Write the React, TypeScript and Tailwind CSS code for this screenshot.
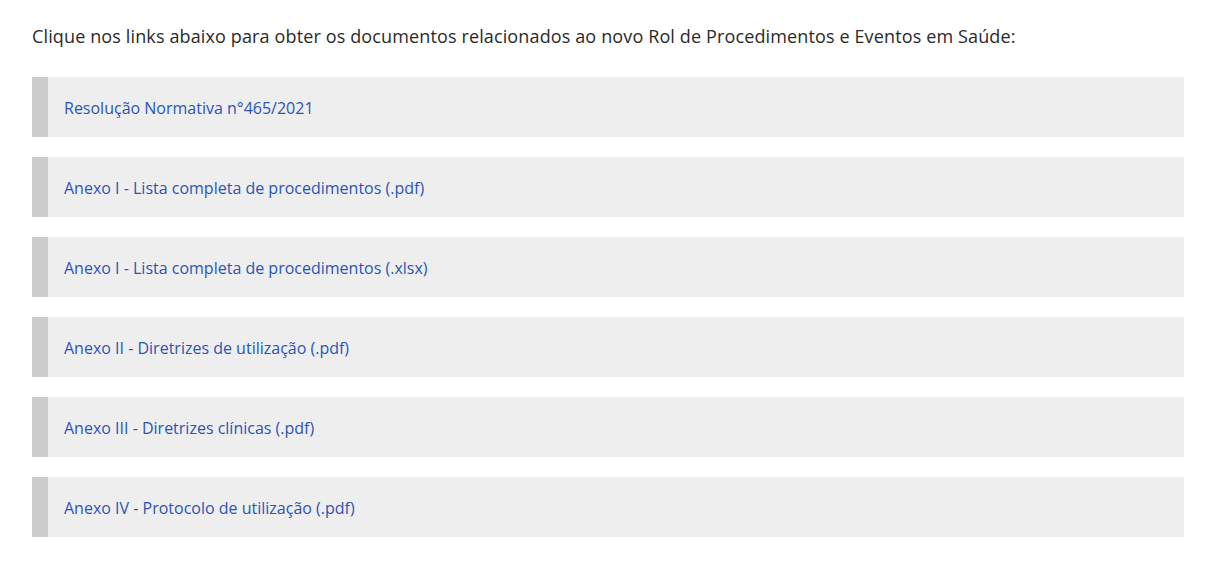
const links = [
  "Resolução Normativa n°465/2021",
  "Anexo I - Lista completa de procedimentos (.pdf)",
  "Anexo I - Lista completa de procedimentos (.xlsx)",
  "Anexo II - Diretrizes de utilização (.pdf)",
  "Anexo III - Diretrizes clínicas (.pdf)",
  "Anexo IV - Protocolo de utilização (.pdf)",
];

export default function App() {
  return (
    <div
      className="min-h-[576px] bg-white pl-8 pr-6 pt-[25px]"
      style={{ fontFamily: "'Open Sans', 'Liberation Sans', sans-serif" }}
    >
      <p className="text-[18px] leading-[22px] font-medium tracking-[0.13px] text-[#2a2a2a]">
        Clique nos links abaixo para obter os documentos relacionados ao novo Rol de Procedimentos e Eventos em Saúde:
      </p>

      <div className="mt-[30px] flex flex-col gap-5">
        {links.map((label) => (
          <div
            key={label}
            className="flex h-[60px] items-center border-l-[16px] border-[#cccccc] bg-[#eeeeee] pl-4 pt-[2px]"
          >
            <a href="#" className="text-[16px] text-[#2b55b5]">
              {label}
            </a>
          </div>
        ))}
      </div>
    </div>
  );
}
